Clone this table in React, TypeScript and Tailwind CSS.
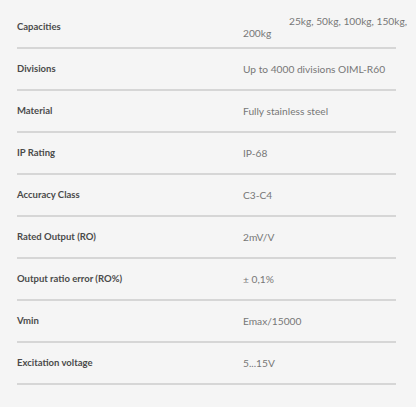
const specs = [
  { label: "Capacities", value: ["25kg, 50kg, 100kg, 150kg,", "200kg"] },
  { label: "Divisions", value: ["Up to 4000 divisions OIML-R60"] },
  { label: "Material", value: ["Fully stainless steel"] },
  { label: "IP Rating", value: ["IP-68"] },
  { label: "Accuracy Class", value: ["C3-C4"] },
  { label: "Rated Output (RO)", value: ["2mV/V"] },
  { label: "Output ratio error (RO%)", value: ["± 0,1%"] },
  { label: "Vmin", value: ["Emax/15000"] },
  { label: "Excitation voltage", value: ["5...15V"] },
];

export default function App() {
  return (
    <div
      className="min-h-[407px] w-[416px] bg-[#f5f5f5] pt-[7px] pl-[17px] pr-[20px]"
      style={{ fontFamily: "Lato, 'Open Sans', sans-serif" }}
    >
      {specs.map((s) => (
        <div
          key={s.label}
          className="flex h-[42px] items-center border-b-2 border-[#d6d6d6]"
        >
          <div className="w-[226px] shrink-0 text-[9.5px] font-bold text-[#4a4a4a]">
            {s.label}
          </div>
          <div className="min-w-0 flex-1 whitespace-nowrap text-[10.2px] leading-[12px] text-[#777777]">
            {s.value.length > 1 ? (
              <>
                <div className="pl-[46px]">{s.value[0]}</div>
                <div>{s.value[1]}</div>
              </>
            ) : (
              s.value[0]
            )}
          </div>
        </div>
      ))}
    </div>
  );
}
